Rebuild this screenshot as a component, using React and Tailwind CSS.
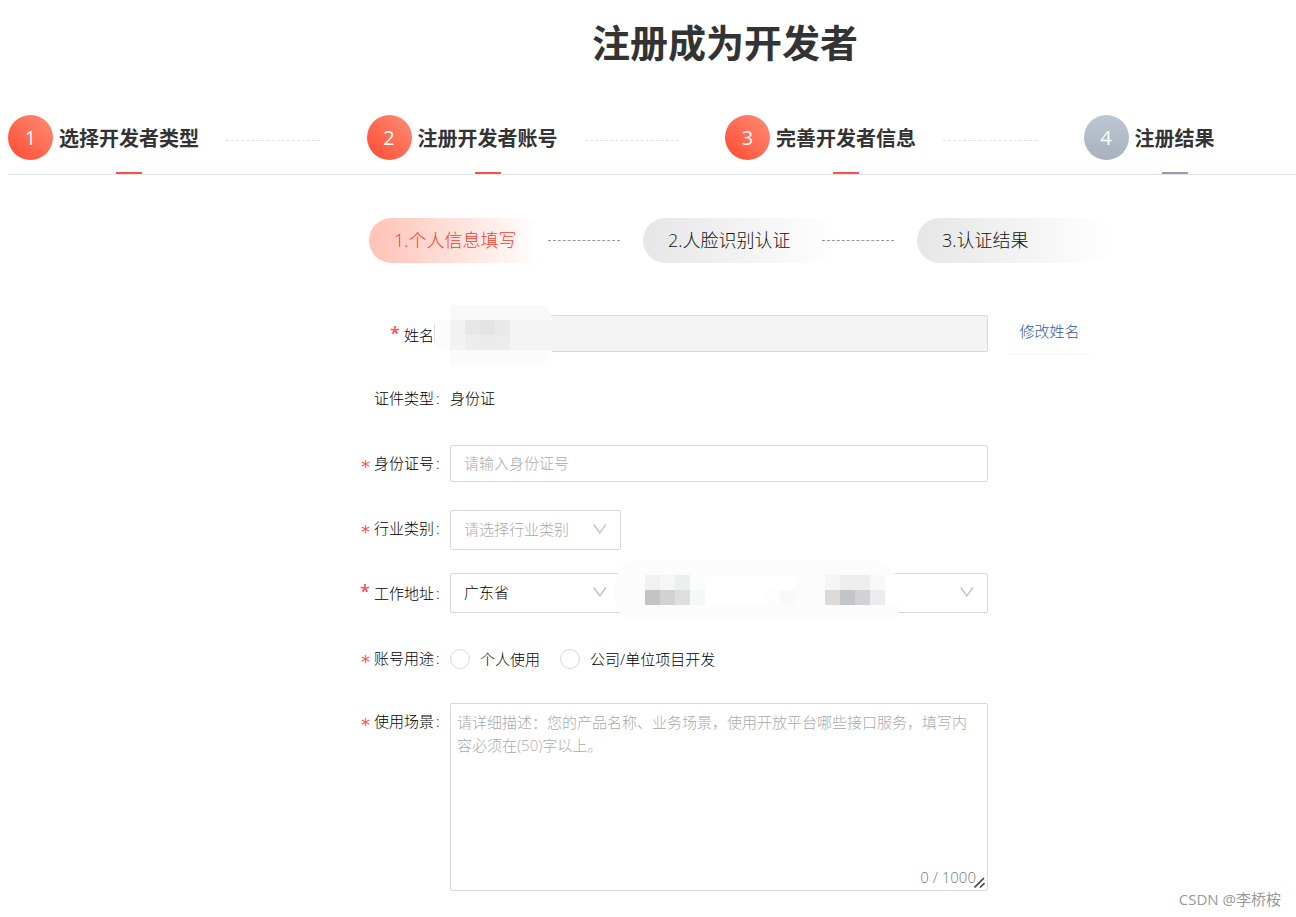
import React from 'react';
import { clsx } from 'clsx';

const steps = [
  { title: '选择开发者类型', done: true },
  { title: '注册开发者账号', done: true },
  { title: '完善开发者信息', done: true },
  { title: '注册结果', done: false },
];

const subSteps = ['1.个人信息填写', '2.人脸识别认证', '3.认证结果'];

const Step = ({ index, title, done, last }) => (
  <li className="relative flex h-[59px] flex-1">
    <span
      className={clsx(
        'flex size-[45px] shrink-0 items-center justify-center rounded-full text-xl text-white',
        done
          ? 'bg-linear-to-tr from-[#ff452e] to-[#fd8c74]'
          : 'bg-linear-to-t from-[#a9b0be] to-[#bcc7d4]'
      )}
    >
      {index}
    </span>
    <span className="ml-1.5 flex flex-col items-center justify-between">
      <span className="text-xl leading-[48px] font-bold whitespace-nowrap text-[#333]">{title}</span>
      <span className={clsx('h-0.5 w-[26px]', done ? 'bg-[#fe4f40]' : 'bg-[#9a9ca5]')} />
    </span>
    {!last && <span className="mt-[25px] ml-[27px] h-px w-[94px] border-t border-dashed border-[#e0e0e0]" />}
  </li>
);

// Form row: label on the left, control on the right
const Row = ({ label, htmlFor, mark, colon = true, className = 'h-[65px]', children }) => (
  <div className={clsx('flex items-start gap-2', className)}>
    <label htmlFor={htmlFor} className="flex w-[83px] shrink-0 justify-end leading-9">
      {mark === 'high' && <span className="mr-1 text-lg leading-9 font-semibold text-[#ff4d4f]">*</span>}
      {mark === 'mid' && (
        <span className="mr-1 pt-1 font-['DejaVu_Sans'] text-lg leading-9 font-normal text-[#ff4d4f]">*</span>
      )}
      <span className={clsx('whitespace-nowrap', mark === 'high' && 'pt-0.5')}>{label}</span>
      <span className={clsx('w-2 pl-0.5', mark === 'high' && 'pt-0.5')}>{colon ? ':' : ''}</span>
    </label>
    {children}
  </div>
);

const Select = ({ id, label, options, placeholder, className }) => (
  <div className="relative">
    <select
      id={id}
      aria-label={label}
      defaultValue={placeholder ? '' : options[0]}
      className={clsx(
        'h-10 w-[171px] appearance-none rounded-xs border border-[#d9d9d9] bg-white pb-0.5 pl-[13px] outline-none focus:border-[#fe4f40]',
        className
      )}
    >
      {placeholder && <option value="">{placeholder}</option>}
      {options.map((o) => (
        <option key={o}>{o}</option>
      ))}
    </select>
    <svg
      viewBox="0 0 14 10"
      className="pointer-events-none absolute top-3.5 right-3.5 h-2.5 w-3.5"
      fill="none"
      stroke="#bfbfbf"
      strokeWidth="1.3"
    >
      <path d="M0.7 0.5 L6.8 8.8 L12.9 0.5" />
    </svg>
  </div>
);

const NameMask = () => (
  <svg
    viewBox="0 0 120 60"
    className="pointer-events-none absolute -top-2.5 -left-4 h-[60px] w-[120px]"
    shapeRendering="crispEdges"
  >
    <rect x="0" y="19" width="1" height="18" fill="#dcdce0" />
    <rect x="1" y="15" width="15" height="30" fill="#fcfcfc" />
    <path d="M16 0 H111 L120 15 H16 Z" fill="#f9f9f9" />
    <path d="M16 45 H119 L109 60 H16 Z" fill="#fbfbfb" />
    <rect x="16" y="15" width="104" height="30" fill="#f4f4f4" />
    <rect x="16" y="15" width="15" height="30" fill="#f2f2f2" />
    <rect x="31" y="15" width="15" height="15" fill="#e7e7e7" />
    <rect x="46" y="15" width="15" height="15" fill="#e4e4e4" />
    <rect x="61" y="15" width="15" height="15" fill="#e9e9e9" />
    <rect x="31" y="30" width="15" height="15" fill="#ededed" />
    <rect x="46" y="30" width="15" height="15" fill="#ebebeb" />
    <rect x="61" y="30" width="15" height="15" fill="#ececec" />
  </svg>
);

const addressCells = [
  [31, 15, '#f1f1f1'], [46, 15, '#f6f6f6'], [61, 15, '#edefee'], [76, 15, '#fafdfc'],
  [31, 30, '#c5c4c3'], [46, 30, '#d2d2d4'], [61, 30, '#dededc'], [76, 30, '#f5f8f7'],
  [151, 30, '#fdfdfd'], [166, 30, '#f9f9f9'],
  [211, 15, '#f7f5f3'], [226, 15, '#eeeeee'], [241, 15, '#eeeeee'], [256, 15, '#f8f8f8'],
  [211, 30, '#dedad7'], [226, 30, '#c4c5c7'], [241, 30, '#d2d2d4'], [256, 30, '#ebecee'],
];

const AddressMask = () => (
  <svg
    viewBox="0 0 288 60"
    className="pointer-events-none absolute -top-[13px] left-[164px] h-[60px] w-[288px]"
    shapeRendering="crispEdges"
  >
    <path d="M16 0 H262 Q274 4 282 15 L287 45 L282 60 H11 Q1 48 0 34 Q1 8 16 0 Z" fill="#fcfcfc" />
    <rect x="91" y="15" width="90" height="30" fill="#fff" />
    <rect x="271" y="15" width="17" height="30" fill="#fff" />
    {addressCells.map(([x, y, fill]) => (
      <rect key={`${x}-${y}`} x={x} y={y} width="15" height="15" fill={fill} />
    ))}
  </svg>
);

const Radio = ({ value, children }) => (
  <label className="flex items-center gap-2.5 whitespace-nowrap">
    <input
      type="radio"
      name="usage"
      value={value}
      className="size-5 appearance-none rounded-full border border-[#d9d9d9] bg-white checked:border-[6px] checked:border-[#fe4f40]"
    />
    {children}
  </label>
);

export default function App() {
  const [scene, setScene] = React.useState('');

  return (
    <div className="overflow-hidden bg-white pb-2 pl-2 font-['Open_Sans','Noto_Sans_CJK_SC',sans-serif] text-[15px] text-black">
      <main className="w-full min-w-[1434px]">
        <h1 className="pt-3 text-center text-[38px] leading-[60px] font-bold text-[#333]">注册成为开发者</h1>

        <ol className="mt-[43px] flex border-b border-[#e0e4ef]">
          {steps.map((s, i) => (
            <Step key={s.title} index={i + 1} title={s.title} done={s.done} last={i === steps.length - 1} />
          ))}
        </ol>

        <div className="mx-auto w-[732px]">
          <ol className="mt-[43px] flex items-center pl-2.5 text-lg font-light">
            {subSteps.map((title, i) => (
              <li key={title} className="flex shrink-0 items-center">
                <span
                  className={clsx(
                    'rounded-full bg-linear-to-r pl-[25px] leading-[45px] whitespace-nowrap',
                    i === 0
                      ? 'w-[179px] from-[#ffc2b6] to-white to-95% text-[#fb3a2a]'
                      : '-mr-4 w-[195px] from-[#e6e6e6] to-white text-[#111]'
                  )}
                >
                  {title}
                </span>
                {i < subSteps.length - 1 && (
                  <span className="mr-[23px] w-[72px] border-t border-dashed border-[#999]" />
                )}
              </li>
            ))}
          </ol>

          <form className="mt-[52px] font-light" onSubmit={(e) => e.preventDefault()}>
            <Row label="姓名" htmlFor="name" mark="high" colon={false}>
              <div className="relative">
                <input
                  id="name"
                  type="text"
                  disabled
                  className="block h-[37px] w-[538px] rounded-xs border border-[#d9d9d9] bg-[#f4f4f4] px-3.5"
                />
                <NameMask />
              </div>
              <button
                type="button"
                className="ml-3 h-10 w-[83px] border-b-2 border-[#fafafa] pb-1.5 whitespace-nowrap text-[#2f58a8]"
              >
                修改姓名
              </button>
            </Row>

            <Row label="证件类型">
              <span className="leading-9">身份证</span>
            </Row>

            <Row label="身份证号" htmlFor="idcard" mark="mid">
              <input
                id="idcard"
                type="text"
                placeholder="请输入身份证号"
                className="h-[37px] w-[538px] rounded-xs border border-[#d9d9d9] px-[13px] pb-0.5 outline-none placeholder:text-[#aaa] focus:border-[#fe4f40]"
              />
            </Row>

            <Row label="行业类别" htmlFor="industry" mark="mid" className="h-[63px]">
              <Select
                id="industry"
                placeholder="请选择行业类别"
                options={['互联网', '金融', '教育', '物流']}
                className="text-[#aaa]"
              />
            </Row>

            <Row label="工作地址" htmlFor="province" mark="high" className="h-[67px]">
              <div className="relative flex w-[538px] justify-between">
                <Select id="province" options={['广东省']} />
                <Select id="city" label="城市" options={['']} />
                <Select id="district" label="区县" options={['']} />
                <AddressMask />
              </div>
            </Row>

            <Row label="账号用途" mark="mid" className="h-[63px]">
              <div className="flex h-[38px] items-center gap-5">
                <Radio value="personal">个人使用</Radio>
                <Radio value="company">公司/单位项目开发</Radio>
              </div>
            </Row>

            <Row label="使用场景" htmlFor="scene" mark="mid" className="h-[188px]">
              <div className="relative">
                <textarea
                  id="scene"
                  value={scene}
                  maxLength={1000}
                  onChange={(e) => setScene(e.target.value)}
                  placeholder="请详细描述：您的产品名称、业务场景，使用开放平台哪些接口服务，填写内容必须在(50)字以上。"
                  className="block h-[188px] w-[538px] resize-none rounded-xs border border-[#d9d9d9] px-1.5 py-[7px] leading-[23px] outline-none placeholder:text-[#aaa] focus:border-[#fe4f40]"
                />
                <span className="absolute right-3 bottom-[3px] leading-[22px] text-[#777]">{scene.length} / 1000</span>
                <svg
                  viewBox="0 0 11 11"
                  className="pointer-events-none absolute right-[3px] bottom-[3px] size-[11px]"
                  stroke="#444"
                  strokeWidth="1.6"
                >
                  <path d="M0.5 10.5 L10 1 M6 10.5 L10.5 6" />
                </svg>
              </div>
            </Row>
          </form>
        </div>
      </main>

      <footer className="flex justify-end pr-[15px] leading-4 text-[#999]">CSDN @李桥桉</footer>
    </div>
  );
}
